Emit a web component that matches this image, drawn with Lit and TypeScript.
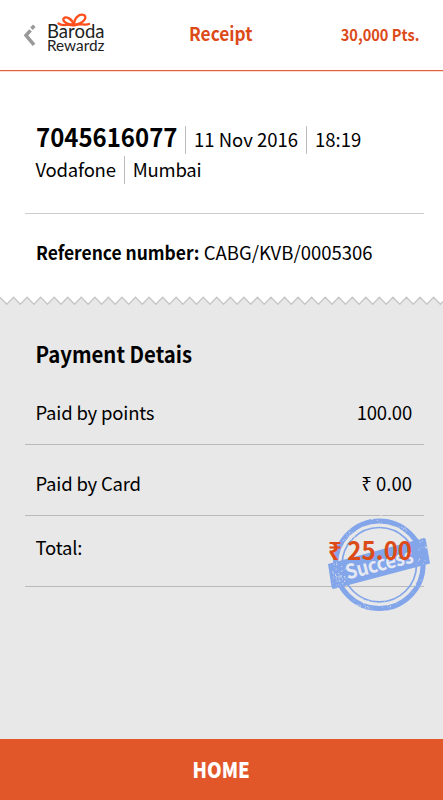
import { LitElement, html, svg, css } from "lit";
import { customElement } from "lit/decorators.js";

const STEP = 13.55;
const zig = (() => {
  let d = "M0 1.3";
  for (let i = 0; i < 34; i++) {
    d += ` L${(i * STEP + STEP / 2).toFixed(2)} 8.3 L${((i + 1) * STEP).toFixed(2)} 1.3`;
  }
  return d;
})();

// Areas of the ink stamp that look worn: x, y, spread, number of specks
const wornAreas = [
  [19, 69, 11, 45], [46, 96, 12, 40], [70, 97, 10, 16], [101, 36, 9, 14], [30, 25, 9, 24],
  [84, 21, 8, 12], [95, 75, 10, 12], [20, 58, 9, 12], [60, 10, 10, 10], [102, 52, 7, 8],
];
let seed = 11;
const rnd = () => (seed = (seed * 16807) % 2147483647) / 2147483647;
const specks = wornAreas.flatMap(([x, y, s, n]) =>
  Array.from({ length: n }, () => [
    x + (rnd() + rnd() - 1) * s,
    y + (rnd() + rnd() - 1) * s,
    0.25 + rnd() * 0.4,
  ])
);

@customElement("success-stamp")
class SuccessStamp extends LitElement {
  static styles = css`
    :host { display: block; width: 116px; height: 108px; }
    svg { display: block; }
    .label { font: 700 20px "Noto Sans CJK JP", "Noto Sans", sans-serif; fill: #e6e9f2; }
  `;
  render() {
    return html`<svg width="116" height="108" viewBox="0 0 116 108">
      <g fill="none" stroke="#83a5ea">
        <circle cx="59.3" cy="54.7" r="43.8" stroke-width="5"></circle>
        <circle cx="59.3" cy="54.7" r="37.2" stroke-width="1.7"></circle>
      </g>
      <path d="M8 54 L104 28 Q105.5 28 105.8 29.5 L110 53.5 L13.500 79 Q12 79 11.500 77 Z" fill="#83a5ea"></path>
      <g fill="#e8e8e8">${specks.map(([x, y, r]) => svg`<circle cx=${x.toFixed(1)} cy=${y.toFixed(1)} r=${r.toFixed(2)}></circle>`)}</g>
      <text class="label" transform="translate(27.5 69.5) rotate(-14.5)" textLength="69" lengthAdjust="spacingAndGlyphs">Success</text>
    </svg>`;
  }
}

@customElement("brand-logo")
class BrandLogo extends LitElement {
  static styles = css`
    :host { display: block; width: 60px; height: 44px; }
    svg { display: block; }
    text { font-family: Lato, sans-serif; font-weight: 400; fill: #222; }
    .top { font-size: 19.5px; }
    .bottom { font-size: 14.8px; }
  `;
  render() {
    return html`<svg width="60" height="44" viewBox="0 0 60 44">
      <text class="top" x="-1" y="28.3" textLength="57.5" lengthAdjust="spacingAndGlyphs">Baroda</text>
      <text class="bottom" x="-1" y="41" textLength="57.5" lengthAdjust="spacingAndGlyphs">Rewardz</text>
      <g fill="none" stroke="#ff4f1c" stroke-width="2.3" stroke-linecap="round" stroke-linejoin="round">
        <path d="M25.5 15 C24.5 8.5 18 6 15.500 8.500 C14.500 12 19 14 25.500 15"></path>
        <path d="M26 15 C26 8 31 3.500 36 5 C40 8 35 13.500 26 15"></path>
        <path d="M25 15.300 C19 13.500 15 17 10.500 13.500"></path>
        <path d="M27 15.300 C32 12.500 37 16 41 14"></path>
      </g>
    </svg>`;
  }
}

@customElement("app-root")
class AppRoot extends LitElement {
  static styles = css`
    :host {
      display: flex; flex-direction: column; width: 443px; height: 800px; overflow: hidden;
      background: #fff; color: #000; box-sizing: border-box;
      font: 400 18.5px/28px "Noto Sans CJK JP", "Noto Sans", sans-serif;
      white-space: nowrap;
    }
    header {
      display: grid; grid-template-columns: 188.5px 1fr auto; height: 70px; box-sizing: content-box;
      border-bottom: 1px solid #e4603c; box-shadow: 0 1px #fbdcd3; padding-right: 24px; color: #dc4a18; flex: none;
    }
    .left { display: flex; padding: 10px 0 0 24px; gap: 12px; }
    .back { margin-top: 14px; }
    .title { font-weight: 700; padding-top: 18.5px; transform: scaleX(0.935); transform-origin: left; }
    .pts { font-size: 16px; font-weight: 700; padding-top: 20px; transform: scaleX(0.91); transform-origin: right; }
    .info { height: 143px; box-sizing: border-box; margin: 0 19px 0 25px; padding: 55px 0 0 10.5px; border-bottom: 1px solid #ccc; flex: none; }
    .line { display: flex; height: 28px; margin-bottom: 2px; line-height: 26px; }
    .line > * + * { border-left: 1px solid #bbb; margin-left: 8px; padding-left: 8px; }
    .phone { width: 141.5px; font-size: 25.5px; font-weight: 700; line-height: 20px; transform: scaleX(0.94); transform-origin: left; }
    .op, .city { line-height: 27px; letter-spacing: -0.22px; }
    .ref { height: 82px; padding: 24px 0 0 35.5px; box-sizing: border-box; flex: none; }
    .ref b { display: inline-block; font-weight: 700; transform: scaleX(0.942); transform-origin: left; margin-right: -9.5px; }
    .zig { display: block; flex: none; }
    .details { flex: 1; background: #e8e8e8; padding: 0 19px 0 25px; }
    h2 { margin: 0; font-size: 22px; font-weight: 700; transform: scaleX(0.925); transform-origin: 10px 50%; padding: 34px 0 0 10.5px; height: 69px; box-sizing: border-box; }
    .row { display: flex; justify-content: space-between; height: 71px; box-sizing: border-box; padding: 24px 12px 0 10.5px; border-bottom: 1px solid #b9b9b9; position: relative; letter-spacing: -0.2px; }
    .money { letter-spacing: 0; }
    .total { padding-top: 17px; }
    .amount { color: #dc4a18; font-weight: 700; font-size: 25px; position: relative; padding-top: 2px; letter-spacing: 0; transform: scaleX(0.965); transform-origin: right; }
    success-stamp { position: absolute; left: 294.5px; top: -6px; }
    footer { flex: none; height: 61px; background: #e2572a; color: #fff; font: 900 21px/61px "Noto Sans CJK JP", sans-serif; text-align: center; }
    .home { display: inline-block; transform: scaleX(0.89); }
  `;
  render() {
    return html`
      <header>
        <div class="left">
          <svg class="back" width="12" height="23" viewBox="0 0 12 23"><path d="M10.3 1.8 L7.5 4.8 M6.5 6.3 L2 11.3 L10 20.8" fill="none" stroke="#999" stroke-width="3.5"></path></svg>
          <brand-logo></brand-logo>
        </div>
        <div class="title">Receipt</div>
        <div class="pts">30,000 Pts.</div>
      </header>
      <section class="info">
        <div class="line"><span class="phone">7045616077</span><span>11 Nov 2016</span><span>18:19</span></div>
        <div class="line"><span class="op">Vodafone</span><span class="city">Mumbai</span></div>
      </section>
      <div class="ref"><b>Reference number:</b> <span>CABG/KVB/0005306</span></div>
      <svg class="zig" width="443" height="9" viewBox="0 0 443 9">
        <path d="${zig} V9 H0 Z" fill="#e8e8e8"></path>
        <path d=${zig} fill="none" stroke="#c6c6c6" stroke-width="1.3"></path>
      </svg>
      <section class="details">
        <h2>Payment Detais</h2>
        <div class="row"><span>Paid by points</span><span>100.00</span></div>
        <div class="row"><span>Paid by Card</span><span class="money">₹ 0.00</span></div>
        <div class="row total"><span>Total:</span><success-stamp></success-stamp><span class="amount">₹ 25.00</span></div>
      </section>
      <footer><span class="home">HOME</span></footer>
    `;
  }
}
